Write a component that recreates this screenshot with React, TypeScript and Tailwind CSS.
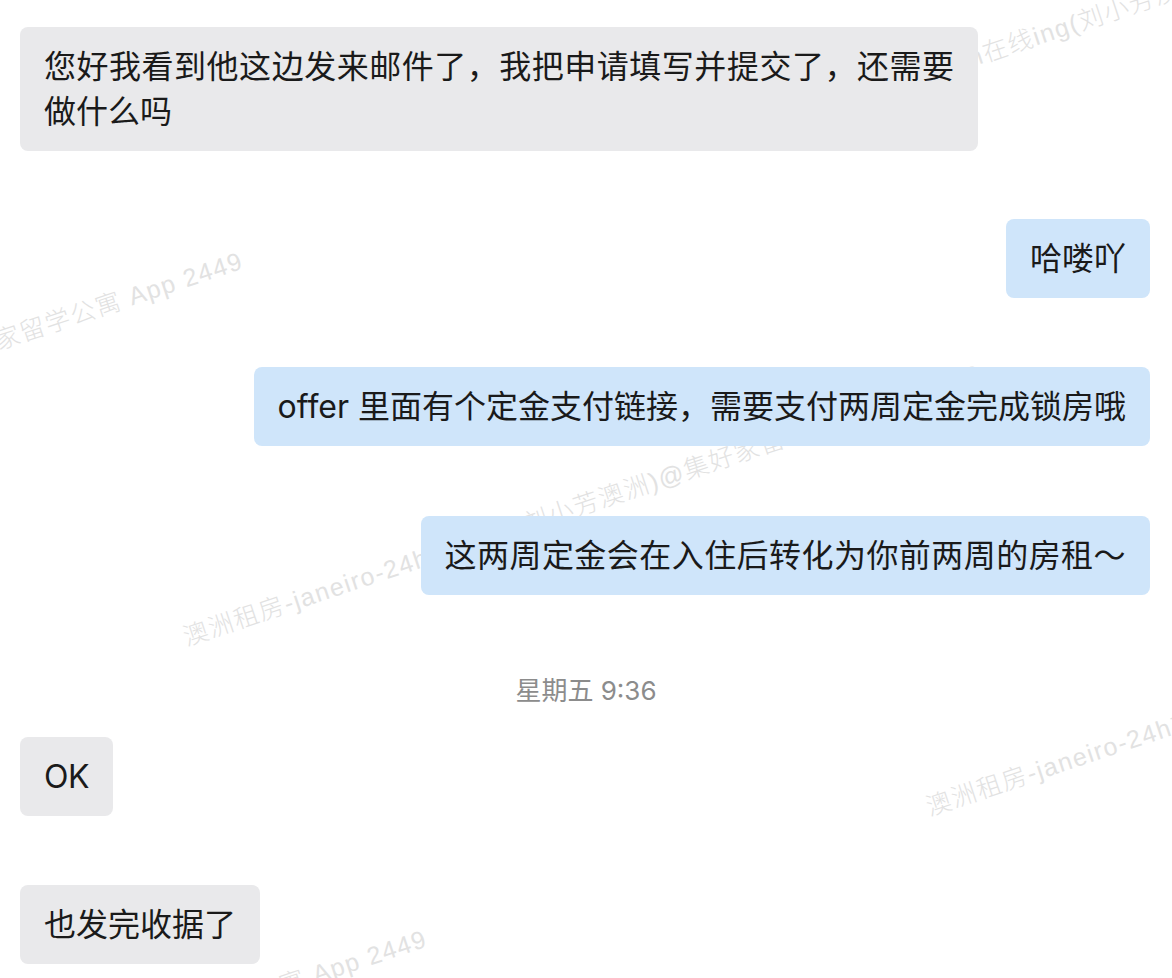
const mark = "澳洲租房-janeiro-24h在线ing(刘小芳澳洲)@集好家留学公寓 App 2449";

function Bubble({ side, className = "", children }: { side: "left" | "right"; className?: string; children: React.ReactNode }) {
  const tone = side === "left" ? "self-start bg-[#e9e9eb]" : "self-end bg-[#cfe5fa]";
  return <div className={`${tone} ${className} rounded-lg px-6 py-[17px] text-[32px] leading-[45px] text-[#1a1a1a]`}>{children}</div>;
}

export default function App() {
  return (
    <div
      className="relative h-[978px] overflow-hidden bg-white"
      style={{ fontFamily: '"Inter", "Noto Sans CJK SC", sans-serif' }}
    >
      {/* watermark */}
      <div
        className="pointer-events-none absolute inset-0 select-none whitespace-nowrap text-[25px] leading-[25px] font-light tracking-[1.5px] text-[#e2e2e2]"
        style={{ fontFamily: '"Liberation Sans", "Noto Sans CJK SC", sans-serif' }}
      >
        <span className="absolute left-[845px] top-[87px] origin-top-left -rotate-[18.4deg]">janeiro-24h在线ing(刘小芳澳洲)@集好家留学公寓 App 2449</span>
        <span className="absolute right-[934px] top-[248px] origin-top-right -rotate-[18.4deg]">{mark}</span>
        <span className="absolute left-[180px] top-[626px] origin-top-left -rotate-[18.4deg]">{mark}</span>
        <span className="absolute left-[923px] top-[796px] origin-top-left -rotate-[18.4deg]">{mark}</span>
        <span className="absolute right-[750px] top-[926px] origin-top-right -rotate-[18.4deg]">{mark}</span>
      </div>

      <div className="relative flex flex-col pl-5 pr-[22px] pt-[27px]">
        <div className="w-[958px] self-start rounded-lg bg-[#e9e9eb] px-6 py-[17px] text-[32px] leading-[45px] text-[#1a1a1a]">
          <p className="text-justify [text-align-last:justify]">您好我看到他这边发来邮件了，我把申请填写并提交了，还需要</p>
          <p>做什么吗</p>
        </div>

        <div className="mt-[68px] flex flex-col">
          <Bubble side="right">哈喽吖</Bubble>
        </div>
        <div className="mt-[69px] flex flex-col">
          <Bubble side="right">
            <span className="mr-[9px]">offer</span>里面有个定金支付链接，需要支付两周定金完成锁房哦
          </Bubble>
        </div>
        <div className="mt-[70px] flex flex-col">
          <Bubble side="right" className="tracking-[0.45px]">这两周定金会在入住后转化为你前两周的房租～</Bubble>
        </div>

        <p className="mt-[78px] -mr-[2px] text-center text-[26px] leading-[35px] text-[#8c8c8c]">星期五 9:36</p>

        <div className="mt-[29px] flex flex-col">
          <Bubble side="left" className="tracking-[-0.5px]">OK</Bubble>
        </div>
        <div className="mt-[69px] flex flex-col">
          <Bubble side="left">也发完收据了</Bubble>
        </div>
      </div>
    </div>
  );
}
